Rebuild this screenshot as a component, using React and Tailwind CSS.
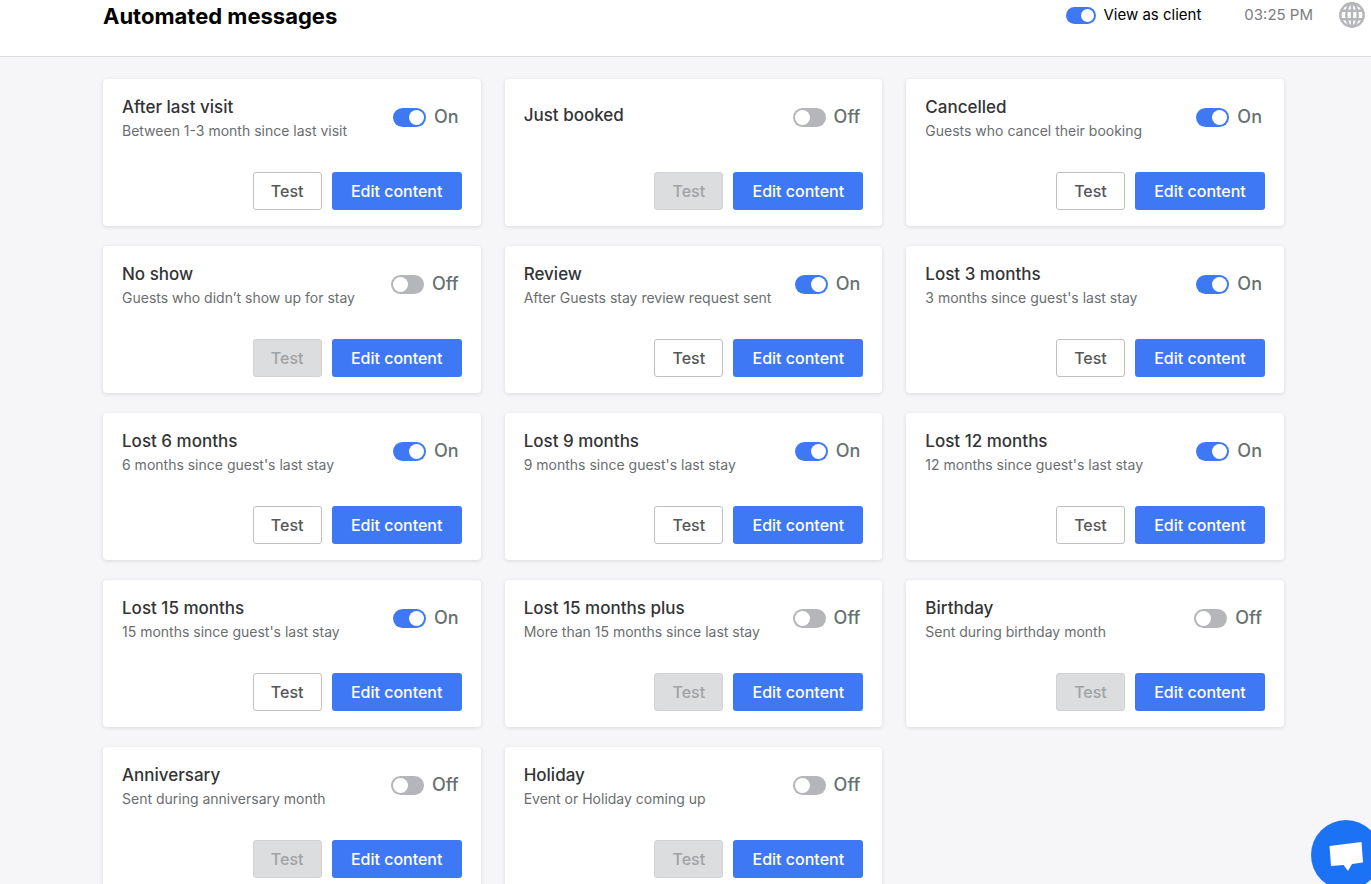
import React, { useState } from 'react';

const MESSAGES = [
  { id: 'after-last-visit', title: 'After last visit', description: 'Between 1-3 month since last visit', enabled: true },
  { id: 'just-booked', title: 'Just booked', description: '', enabled: false },
  { id: 'cancelled', title: 'Cancelled', description: 'Guests who cancel their booking', enabled: true },
  { id: 'no-show', title: 'No show', description: 'Guests who didn’t show up for stay', enabled: false },
  { id: 'review', title: 'Review', description: 'After Guests stay review request sent', enabled: true },
  { id: 'lost-3', title: 'Lost 3 months', description: "3 months since guest's last stay", enabled: true },
  { id: 'lost-6', title: 'Lost 6 months', description: "6 months since guest's last stay", enabled: true },
  { id: 'lost-9', title: 'Lost 9 months', description: "9 months since guest's last stay", enabled: true },
  { id: 'lost-12', title: 'Lost 12 months', description: "12 months since guest's last stay", enabled: true },
  { id: 'lost-15', title: 'Lost 15 months', description: "15 months since guest's last stay", enabled: true },
  { id: 'lost-15-plus', title: 'Lost 15 months plus', description: 'More than 15 months since last stay', enabled: false },
  { id: 'birthday', title: 'Birthday', description: 'Sent during birthday month', enabled: false },
  { id: 'anniversary', title: 'Anniversary', description: 'Sent during anniversary month', enabled: false },
  { id: 'holiday', title: 'Holiday', description: 'Event or Holiday coming up', enabled: false },
];

function GlobeIcon() {
  return (
    <svg viewBox="0 0 26 26" className="size-[26px]" fill="none" stroke="#b5b6b9" strokeWidth="2.4" aria-hidden="true">
      <circle cx="13" cy="13" r="11.700" />
      <ellipse cx="13" cy="13" rx="5.700" ry="11.700" />
      <path d="M13 1v24M2.500 8.800h21M2.500 17.200h21" />
    </svg>
  );
}

function MessageCard({ message, onToggle }) {
  const { id, title, description, enabled } = message;

  return (
    <section className="flex flex-col justify-between gap-[29px] rounded-[4px] bg-white px-[19px] py-4 shadow-[0_1px_4px_rgba(0,0,0,0.12)]">
      {/* Title and switch */}
      <div className="flex h-12 items-start justify-between gap-3">
        <div className={description ? '' : 'pt-2'}>
          <h2 className="text-[17px] leading-6 font-medium text-[#333436]">{title}</h2>
          {description && <p className="text-sm leading-6 whitespace-nowrap text-[#6a6e70]">{description}</p>}
        </div>
        <label htmlFor={id} className="flex h-11 items-center gap-2 pr-[3px] text-lg font-medium text-[#667172]">
          <input
            id={id}
            type="checkbox"
            role="switch"
            aria-label={title}
            checked={enabled}
            onChange={() => onToggle(id)}
            className="flex h-[19px] w-[33px] shrink-0 cursor-pointer appearance-none items-center rounded-full bg-[#b5b6b9] px-[2px] before:size-[15px] before:rounded-full before:bg-white before:content-[''] checked:justify-end checked:bg-[#3f78f5]"
          />
          {enabled ? 'On' : 'Off'}
        </label>
      </div>

      {/* Actions */}
      <div className="flex justify-end gap-[10px]">
        <button
          type="button"
          disabled={!enabled}
          className="h-[38px] w-[69px] rounded-[3px] border border-[#bfc0c2] bg-white text-base font-medium text-[#555759] disabled:border-[#d0d2d3] disabled:bg-[#dcdddf] disabled:text-[#a0a2a4]"
        >
          Test
        </button>
        <button type="button" className="h-[38px] w-[130px] rounded-[3px] bg-[#3f78f5] text-base font-medium text-white">
          Edit content
        </button>
      </div>
    </section>
  );
}

export default function App() {
  const [messages, setMessages] = useState(MESSAGES);
  const [viewAsClient, setViewAsClient] = useState(true);

  const handleToggle = (id) => {
    setMessages(prev => prev.map(m => (m.id === id ? { ...m, enabled: !m.enabled } : m)));
  };

  return (
    <div className="min-h-screen bg-[#f6f6f8] font-['Inter',sans-serif]">
      <header className="flex items-start justify-between border-b border-[#d9dadc] bg-white pr-[6px] pb-6 pl-[103px]">
        <h1 className="text-[22px] leading-8 font-bold text-black">Automated messages</h1>
        <div className="flex h-[30px] items-center">
          <label htmlFor="view-as-client" className="flex items-center gap-[7px] text-[15px] text-black">
            <input
              id="view-as-client"
              type="checkbox"
              role="switch"
              checked={viewAsClient}
              onChange={() => setViewAsClient(prev => !prev)}
              className="flex h-[17px] w-[30px] shrink-0 cursor-pointer appearance-none items-center rounded-full bg-[#b5b6b9] px-[2px] before:size-[13px] before:rounded-full before:bg-white before:content-[''] checked:justify-end checked:bg-[#3f78f5]"
            />
            View as client
          </label>
          <time className="ml-[43px] text-[15px] text-[#7b7d80]">03:25 PM</time>
          <button type="button" aria-label="Language" className="ml-[26px]">
            <GlobeIcon />
          </button>
        </div>
      </header>

      <main className="grid grid-cols-1 gap-x-6 gap-y-5 pt-[22px] pr-[87px] pb-6 pl-[103px] md:grid-cols-2 lg:grid-cols-3">
        {messages.map(message => (
          <MessageCard key={message.id} message={message} onToggle={handleToggle} />
        ))}
      </main>

      {/* Support chat */}
      <button
        type="button"
        aria-label="Open chat"
        className="fixed -right-[10px] -bottom-[6px] size-[70px] rounded-full bg-[#1b72f5]"
      >
        <svg viewBox="0 0 70 70" className="size-full" fill="white" aria-hidden="true">
          <path d="M18.500 26 50.500 22 52 42.500 41 44 37 51 32.500 45 20 46Z" />
        </svg>
      </button>
    </div>
  );
}
